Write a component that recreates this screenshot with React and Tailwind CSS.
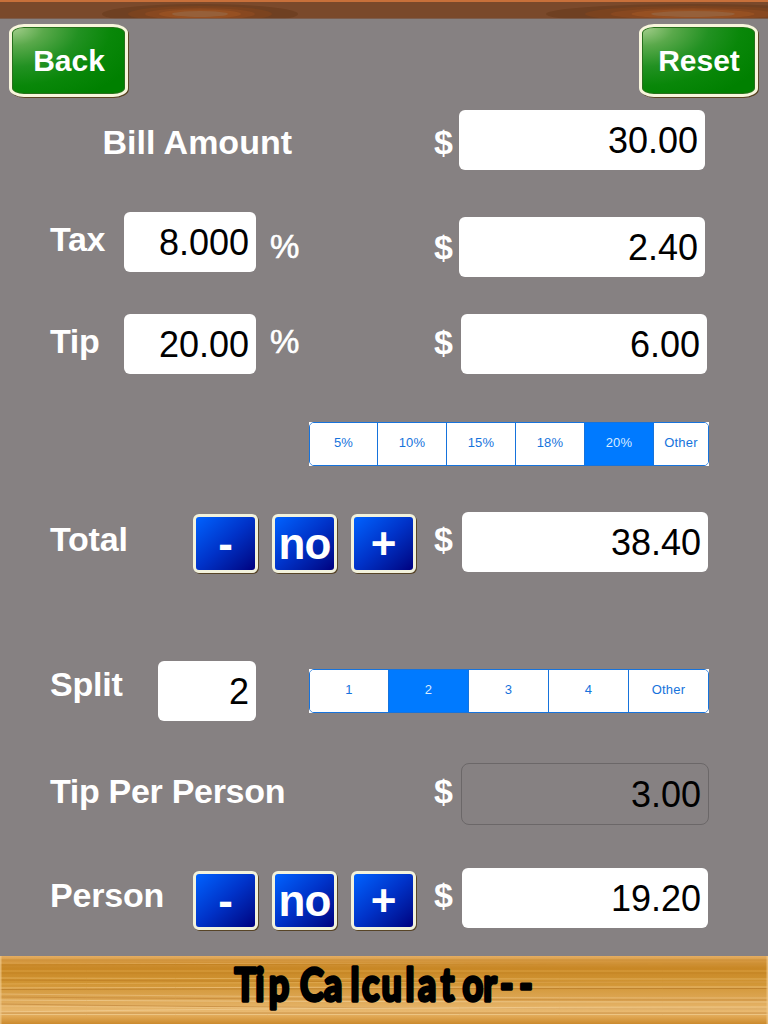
import React, { useState } from 'react';

const Label = ({ className, children }) => (
  <span className={`block shrink-0 whitespace-nowrap leading-[34px] text-white ${className}`}>
    {children}
  </span>
);

const Dollar = ({ className }) => (
  <Label className={`text-[34px] font-bold ${className}`}>$</Label>
);

const Percent = ({ className }) => (
  <Label className={`ml-[14px] w-[164px] text-[33px] [-webkit-text-stroke:0.6px_white] ${className}`}>%</Label>
);

const Field = ({ className = '', value }) => (
  <div className={`h-[60px] shrink-0 rounded-md bg-white pr-[7px] text-right text-[36px] leading-[61px] text-black ${className}`}>
    {value}
  </div>
);

const GreenButton = ({ children }) => (
  <button className="h-[73px] w-[119px] rounded-[15px/9px] border-[3px] border-[#f8f6dc] bg-[radial-gradient(ellipse_at_0%_0%,#a8d08f_0%,#5aa94b_20%,#229122_42%,#098709_62%,#008000_85%)] pl-px text-[30px] font-bold text-white shadow-[1px_1px_0_#5a4522,inset_0_0_0_1px_#286f1c]">
    {children}
  </button>
);

const BlueButton = ({ children }) => (
  <button className="flex h-[59px] w-[65px] shrink-0 justify-center rounded-md border-[3px] border-[#f2f2dc] bg-linear-to-br from-[#0062ff] via-[#0032c8] to-[#000080] text-[44px] leading-[54px] font-bold text-white shadow-[1px_1px_0_#574426]">
    {children}
  </button>
);

const Adjuster = ({ className }) => (
  <div className={`flex shrink-0 gap-[14px] ${className}`}>
    <BlueButton>-</BlueButton>
    <BlueButton><span className="tracking-[-1px]">no</span></BlueButton>
    <BlueButton>+</BlueButton>
  </div>
);

const Segments = ({ className, options, selected, onSelect }) => (
  <div className={`shrink-0 bg-white ${className}`}>
    <div className="flex h-[44px] w-[400px] overflow-hidden rounded-[5px] border border-[#1673dc]">
      {options.map((option, index) => (
        <button
          key={option.label}
          onClick={() => onSelect(option.label)}
          className={`h-full shrink-0 pb-[2px] text-[13px] tracking-[0.2px] ${option.width} ${
            index > 0 ? 'border-l border-[#1673dc]' : ''
          } ${selected === option.label ? 'bg-[#007aff] text-[#d9ebff]' : 'bg-white text-[#1673dc]'}`}
        >
          {option.label}
        </button>
      ))}
    </div>
  </div>
);

const tipOptions = [
  { label: '5%', width: 'w-[67px]' },
  { label: '10%', width: 'w-[69px]' },
  { label: '15%', width: 'w-[69px]' },
  { label: '18%', width: 'w-[69px]' },
  { label: '20%', width: 'w-[69px]' },
  { label: 'Other', width: 'w-[55px]' },
];

const splitOptions = [
  { label: '1', width: 'w-[78px]' },
  { label: '2', width: 'w-[80px]' },
  { label: '3', width: 'w-[80px]' },
  { label: '4', width: 'w-[80px]' },
  { label: 'Other', width: 'w-[80px]' },
];

const Knot = ({ cx, stretch = 1 }) => (
  <g>
    <ellipse cx={cx} cy="14" rx={98 * stretch} ry="10" fill="#6f4022" />
    <ellipse cx={cx} cy="14" rx={72 * stretch} ry="8" fill="#7b431f" />
    <ellipse cx={cx} cy="14" rx={55 * stretch} ry="6" fill="#884820" />
    <ellipse cx={cx} cy="14" rx={41 * stretch} ry="4.5" fill="#965022" />
    <ellipse cx={cx} cy="14" rx={28 * stretch} ry="3" fill="#96603a" />
  </g>
);

const TopBar = () => (
  <svg className="block h-[19px] w-full shrink-0" viewBox="0 0 768 19">
    <rect width="768" height="19" fill="#7a492b" />
    <Knot cx={200} />
    <Knot cx={693} stretch={1.5} />
    <rect width="768" height="2" fill="#c8703a" />
    <rect y="18.3" width="768" height="0.7" fill="#7c655b" />
  </svg>
);

// y, rise at the right end, colour
const grain = [
  [4, 0, '#c98a32'], [7, 1, '#e0aa58'], [9, -1, '#c2801f'], [15, 0, '#dda345'],
  [17, 0, '#c38424'], [22, 1, '#e4b260'], [24, 2, '#bf7f24'], [28, -2, '#e2ac56'],
  [32, -1, '#edc07a'], [33.5, -1, '#bb7d2b'], [38, 4, '#e9bd78'], [41, 3, '#c68a3b'],
  [44, 2, '#efca8e'], [48, 5, '#c78d42'], [50, 3, '#edc483'], [56, -5, '#f1cd92'],
  [57, 0, '#c78e44'], [58.5, 0, '#efca8d'],
];

const Footer = () => (
  <svg className="block h-[68px] w-full shrink-0" viewBox="0 0 768 68">
    <defs>
      <linearGradient id="wood" x1="0" y1="0" x2="0" y2="1">
        <stop offset="0" stopColor="#e5ae62" />
        <stop offset="0.09" stopColor="#d2943a" />
        <stop offset="0.18" stopColor="#c88725" />
        <stop offset="0.4" stopColor="#d19534" />
        <stop offset="0.62" stopColor="#dca552" />
        <stop offset="0.82" stopColor="#e9b970" />
        <stop offset="0.9" stopColor="#dfa550" />
        <stop offset="1" stopColor="#cb8a2e" />
      </linearGradient>
    </defs>
    <rect width="768" height="68" fill="url(#wood)" />
    {grain.map(([y, rise, color]) => (
      <path key={y} d={`M0 ${y} Q 340 ${y + rise} 768 ${y + rise}`} fill="none" stroke={color} strokeWidth="0.8" />
    ))}
    <rect width="1.5" height="68" fill="#f0c98c" opacity="0.7" />
    <rect x="766.5" width="1.5" height="68" fill="#f0c98c" opacity="0.7" />
    {/* condensed hand-lettered title, x positions are in the 0.8 scaled space */}
    <text
      transform="scale(0.8 1)"
      y="45.3"
      x="293 319 336 362 375 405 438 452.5 477 507 522.5 551 578 604 625 649"
      fontFamily="Lato, sans-serif"
      fontSize="45"
      fontWeight="700"
      fill="#000"
      stroke="#000"
      strokeWidth="3.4"
      strokeLinejoin="round"
    >
      Tip Calculator--
    </text>
  </svg>
);

const App = () => {
  const [tip, setTip] = useState('20%');
  const [split, setSplit] = useState('2');

  return (
    <div className="flex h-[1024px] w-[768px] flex-col overflow-hidden bg-[#868182] font-['Liberation_Sans',Arial,sans-serif]">
      <TopBar />
      <div className="flex h-[91px] shrink-0 justify-between pr-[10px] pl-[9px] pt-[5px]">
        <GreenButton>Back</GreenButton>
        <GreenButton>Reset</GreenButton>
      </div>

      <div className="flex h-[102px] shrink-0 items-start">
        <Label className="ml-[102.5px] mt-[15px] w-[331.5px] text-[34px] font-bold">Bill Amount</Label>
        <Dollar className="mt-[15px] w-[25px]" />
        <Field className="w-[246px]" value="30.00" />
      </div>

      <div className="flex h-[102px] shrink-0 items-start">
        <Label className="ml-[50px] mt-[10px] w-[74px] text-[34px] tracking-[-0.3px] font-bold">Tax</Label>
        <Field className="w-[132px]" value="8.000" />
        <Percent className="mt-[18px]" />
        <Dollar className="mt-[18px] w-[25px]" />
        <Field className="mt-[5px] w-[246px]" value="2.40" />
      </div>

      <div className="flex h-[108px] shrink-0 items-start">
        <Label className="ml-[50px] mt-[10px] w-[74px] text-[34px] tracking-[-0.3px] font-bold">Tip</Label>
        <Field className="w-[132px]" value="20.00" />
        <Percent className="mt-[11px]" />
        <Dollar className="mt-[11px] w-[27px]" />
        <Field className="w-[246px]" value="6.00" />
      </div>

      <div className="flex h-[90px] shrink-0 items-start">
        <Segments className="ml-[309px]" options={tipOptions} selected={tip} onSelect={setTip} />
      </div>

      <div className="flex h-[149px] shrink-0 items-start">
        <Label className="ml-[50px] mt-[10px] w-[143px] text-[34px] tracking-[-0.2px] font-bold">Total</Label>
        <Adjuster className="mt-[2px] w-[241px]" />
        <Dollar className="mt-[10px] w-[28px]" />
        <Field className="w-[246px]" value="38.40" />
      </div>

      <div className="flex h-[103px] shrink-0 items-start">
        <Label className="ml-[50px] mt-[6px] w-[108px] text-[34px] tracking-[-0.2px] font-bold">Split</Label>
        <Field className="w-[98px]" value="2" />
        <Segments className="ml-[53px] mt-[8px]" options={splitOptions} selected={split} onSelect={setSplit} />
      </div>

      <div className="flex h-[104px] shrink-0 items-start">
        <Label className="ml-[50px] mt-[10px] w-[384px] text-[34px] tracking-[-0.3px] font-bold">Tip Per Person</Label>
        <Dollar className="mt-[10px] w-[27px]" />
        <div className="-mt-px h-[62px] w-[248px] shrink-0 rounded-lg border border-[#6b6768] pr-[7px] text-right text-[36px] leading-[61px] text-black">
          3.00
        </div>
      </div>

      <div className="flex h-[88px] shrink-0 items-start">
        <Label className="ml-[50px] mt-[10px] w-[143px] text-[34px] tracking-[-0.2px] font-bold">Person</Label>
        <Adjuster className="mt-[3px] w-[241px]" />
        <Dollar className="mt-[10px] w-[28px]" />
        <Field className="w-[246px]" value="19.20" />
      </div>
      <Footer />
    </div>
  );
};

export default App;
